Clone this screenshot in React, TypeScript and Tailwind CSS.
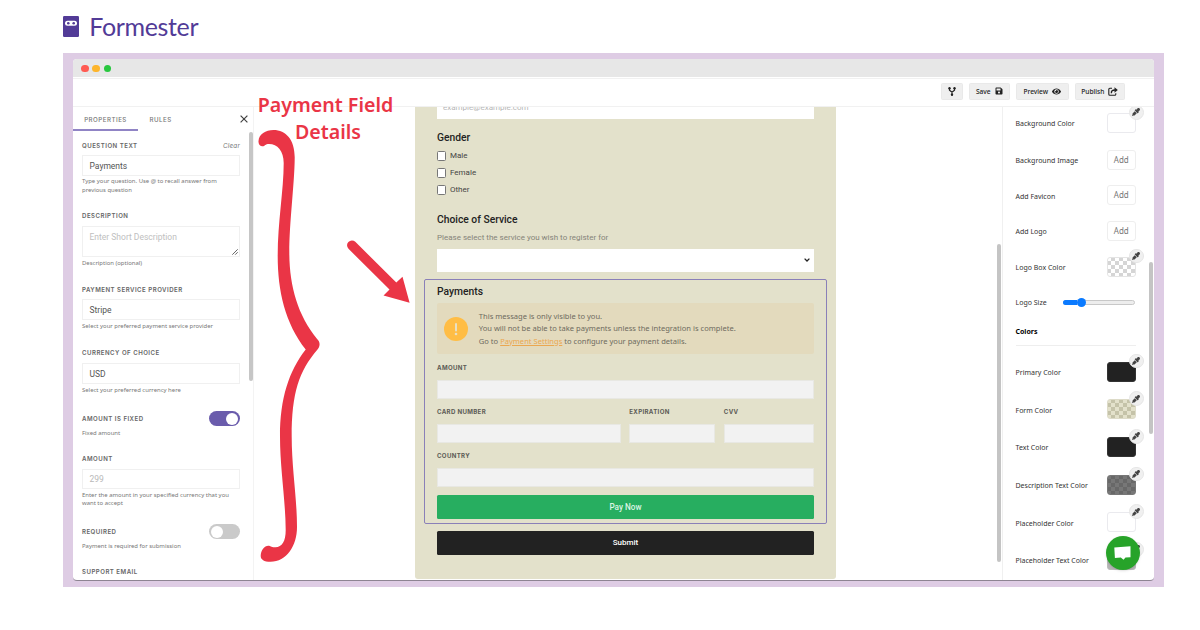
import type { ReactNode } from "react";
import { FaSave, FaEye, FaEyeDropper } from "react-icons/fa";

function Caption({ children, className = "" }: { children: ReactNode; className?: string }) {
  return (
    <div className={"h-2 text-[6.1px] leading-2 font-semibold tracking-[0.48px] whitespace-nowrap text-[#666] " + className}>
      {children}
    </div>
  );
}

function Help({ children, className = "" }: { children: ReactNode; className?: string }) {
  return (
    <div className={"font-['Noto_Sans',sans-serif] text-[5.95px] leading-[8.5px] whitespace-nowrap text-[#777] " + className}>
      {children}
    </div>
  );
}

function Field({ value, muted = false, className = "h-[21px]" }: { value: string; muted?: boolean; className?: string }) {
  return (
    <div
      className={
        "flex w-[158px] items-center border border-[#f0f0f0] pt-px pl-[6.5px] font-[Roboto,sans-serif] text-[8.5px] " +
        (muted ? "text-[#b9b9b9] " : "text-[#555] ") +
        className
      }
    >
      {value}
    </div>
  );
}

function Toggle({ on }: { on: boolean }) {
  return (
    <div className={"flex h-[15px] w-[31px] items-center rounded-full px-[2px] " + (on ? "justify-end bg-[#6a5cac]" : "bg-[#cacaca]")}>
      <div className="size-[12px] rounded-full bg-white" />
    </div>
  );
}

function PropertiesPanel() {
  return (
    <aside className="relative h-[473px] w-[180.5px] shrink-0 overflow-hidden border-r border-[#f3f3f3] font-[Inter,sans-serif]">
      <div className="flex h-6 items-center text-[6.2px] font-medium tracking-[0.48px] text-[#777]">
        <div className="flex h-6 w-[65px] items-center justify-center border-b-2 border-[#9084c5] pt-[2.5px] whitespace-nowrap">PROPERTIES</div>
        <div className="ml-[11.5px] pt-px">RULES</div>
        <svg className="mr-[5px] ml-auto size-2" viewBox="0 0 8 8" stroke="#444" strokeWidth="1.2">
          <path d="M.6.6 7.4 7.4M7.4.6.6 7.4" />
        </svg>
      </div>
      <div className="ml-[9px] flex w-[158px] flex-col pt-[10.6px]">
        <div className="flex justify-between">
          <Caption>QUESTION TEXT</Caption>
          <div className="text-[6.3px] leading-2 tracking-[0.2px] text-[#777] italic">Clear</div>
        </div>
        <Field value="Payments" className="mt-[5.4px] h-[21px]" />
        <Help className="mt-[1.5px]">
          Type your question. Use @ to recall answer from
          <br />
          previous question
        </Help>
        <Caption className="mt-[18px]">DESCRIPTION</Caption>
        <div className="relative mt-[5.5px] h-[31px] border border-[#f0f0f0] pt-[5px] pl-[6.5px] font-[Roboto,sans-serif] text-[8.5px] leading-[10px] text-[#c0c0c0]">
          Enter Short Description
          <svg className="absolute right-[1px] bottom-[1px] size-[6px]" viewBox="0 0 6 6" stroke="#555" strokeWidth=".9">
            <path d="M.3 5.7 5.7.3M3.2 5.7l2.5-2.5" />
          </svg>
        </div>
        <Help className="mt-[2px]">Description (optional)</Help>
        <Caption className="mt-[18.3px]">PAYMENT SERVICE PROVIDER</Caption>
        <Field value="Stripe" className="mt-[5.4px] h-[21px]" />
        <Help className="mt-[2.3px]">Select your preferred payment service provider</Help>
        <Caption className="mt-[18.2px]">CURRENCY OF CHOICE</Caption>
        <Field value="USD" className="mt-[5.8px] h-[21px]" />
        <Help className="mt-[2.5px]">Select your preferred currency here</Help>
        <div className="mt-[16.3px] flex items-center justify-between">
          <Caption>AMOUNT IS FIXED</Caption>
          <Toggle on />
        </div>
        <Help className="mt-[2.5px]">Fixed amount</Help>
        <Caption className="mt-[18px]">AMOUNT</Caption>
        <Field value="299" muted className="mt-[6px] h-[20px]" />
        <Help className="mt-[1.6px]">
          Enter the amount in your specified currency that you
          <br />
          want to accept
        </Help>
        <div className="mt-[16.4px] flex items-center justify-between">
          <Caption>REQUIRED</Caption>
          <Toggle on={false} />
        </div>
        <Help className="mt-[2.3px]">Payment is required for submission</Help>
        <Caption className="mt-[18px]">SUPPORT EMAIL</Caption>
      </div>
      <div className="absolute top-[25px] right-0 h-[249px] w-[3.5px] rounded-full bg-[#c6c6c6]" />
    </aside>
  );
}

function CardField({ label, className }: { label: string; className: string }) {
  return (
    <div className={className}>
      <div className="h-2 font-[Inter,sans-serif] text-[6.1px] leading-2 font-bold tracking-[0.34px] whitespace-nowrap text-[#5c5b55]">{label}</div>
      <div className="mt-2 h-[19px] border border-[#e8e8e3] bg-[#f2f2f2]" />
    </div>
  );
}

function FormPreview() {
  return (
    <main className="relative h-[473px] flex-1">
      <div className="ml-[161.5px] h-[471.5px] w-[421px] overflow-hidden rounded-b-[3px] bg-[#e3e1cb] px-[22px] font-[Roboto,sans-serif]">
        <div className="h-[11.5px] overflow-hidden bg-white pl-[6px]">
          <div className="-mt-[4px] text-[8px] leading-[10px] text-[#b5b5b5]">example@example.com</div>
        </div>
        <div className="mt-[12.5px] text-[10.3px] leading-[14px] font-medium text-[#222]">Gender</div>
        <div className="mt-[2.8px] flex flex-col">
          {["Male", "Female", "Other"].map((name) => (
            <div key={name} className="flex h-[16.8px] items-center gap-[4px] text-[8px] text-[#444]">
              <div className="-ml-[0.5px] size-[9.5px] rounded-[1.5px] border border-[#777] bg-white" />
              {name}
            </div>
          ))}
        </div>
        <div className="mt-[15.2px] text-[10.3px] leading-[14px] font-medium text-[#222]">Choice of Service</div>
        <div className="mt-[6px] text-[8px] leading-[10px] text-[#85847a]">Please select the service you wish to register for</div>
        <div className="mt-[5.6px] flex h-[23px] items-center justify-end bg-white pr-[4px]">
          <svg className="h-[4px] w-[6px]" viewBox="0 0 6 4" fill="none" stroke="#222" strokeWidth="1.3">
            <path d="M.6.6 3 3 5.4.6" />
          </svg>
        </div>
        <section className="-mx-[13px] mt-[6.9px] h-[245px] rounded-[2px] border border-[#8a80b8] px-[12px]">
          <div className="mt-[5.1px] text-[10.3px] leading-[14px] font-medium text-[#222]">Payments</div>
          <div className="mt-[4.4px] flex h-[51px] items-center rounded-[2px] bg-[#e3dabd] pl-[7px]">
            <svg className="size-6" viewBox="0 0 24 24">
              <circle cx="12" cy="12" r="12" fill="#ffbd45" />
              <path d="M12 7v6.5" stroke="#e8e0c4" strokeWidth="2" strokeLinecap="round" />
              <circle cx="12" cy="17" r="1.3" fill="#e8e0c4" />
            </svg>
            <div className="-mt-px ml-[10.8px] font-['Noto_Sans',sans-serif] text-[7.57px] leading-[12.5px] whitespace-nowrap text-[#6e6b60]">
              This message is only visible to you.
              <br />
              You will not be able to take payments unless the integration is complete.
              <br />
              Go to <span className="text-[#eba750] underline">Payment Settings</span> to configure your payment details.
            </div>
          </div>
          <CardField label="AMOUNT" className="mt-[9.5px]" />
          <div className="mt-[9px] flex">
            <CardField label="CARD NUMBER" className="w-[184px]" />
            <CardField label="EXPIRATION" className="ml-[8.3px] w-[86px]" />
            <CardField label="CVV" className="ml-[8.5px] w-[90px]" />
          </div>
          <CardField label="COUNTRY" className="mt-[9px]" />
          <div className="mt-[8px] flex h-[24px] items-center justify-center rounded-[1.5px] bg-[#27ae60] text-[8.2px] font-medium text-[#dcf5e4]">Pay Now</div>
        </section>
        <div className="mt-[7px] flex h-[24px] items-center justify-center rounded-[1.5px] bg-[#222] text-[8px] font-medium text-white">Submit</div>
      </div>
      <div className="absolute top-[137px] right-[1px] h-[318px] w-[3.5px] rounded-full bg-[#c4c4c4]" />
    </main>
  );
}

function Swatch({ fill }: { fill: string }) {
  return (
    <div className="relative">
      <div className={"h-[20px] w-[28.5px] rounded-[3px] border " + fill} />
      <div className="absolute -top-[8px] -right-[8px] flex size-[14.5px] items-center justify-center rounded-full border border-[#e6e6e6] bg-[#f0f0f0]">
        <FaEyeDropper className="size-[8px] text-[#444]" />
      </div>
    </div>
  );
}

const AddButton = () => (
  <div className="flex h-[20px] w-[28.5px] items-center justify-center rounded-[3px] border border-[#eee] text-[8px] text-[#777]">Add</div>
);

function Setting({ label, children, className }: { label: string; children?: ReactNode; className: string }) {
  return (
    <div className={"flex w-[120px] shrink-0 items-center justify-between " + className}>
      <span className="pt-[3px] text-[7px] whitespace-nowrap">{label}</span>
      {children}
    </div>
  );
}

const white = "border-[#eaeaee] bg-white";
const dark = "border-[#333] bg-[#222]";
const checkedLight = "border-[#e4e4e4] bg-[repeating-conic-gradient(#d5d5d5_0_25%,#fff_0_50%)] bg-[length:8px_8px] bg-origin-border";
const checkedSand = "border-[#dddbc8] bg-[repeating-conic-gradient(#c5c3a9_0_25%,#e3e1cb_0_50%)] bg-[length:8px_8px] bg-origin-border";
const checkedGray = "border-[#777] bg-[repeating-conic-gradient(#686868_0_25%,#777_0_50%)] bg-[length:8px_8px] bg-origin-border";

function DesignPanel() {
  return (
    <aside className="relative h-[473px] w-[152px] shrink-0 overflow-hidden border-l border-[#f0f0f0] pl-[13px] font-['Noto_Sans',sans-serif] text-[#333]">
      <Setting label="Background Color" className="h-[32px]"><Swatch fill={white} /></Setting>
      <Setting label="Background Image" className="mt-[3.5px] h-[35px]"><AddButton /></Setting>
      <Setting label="Add Favicon" className="h-[35.5px]"><AddButton /></Setting>
      <Setting label="Add Logo" className="h-[35.5px]"><AddButton /></Setting>
      <Setting label="Logo Box Color" className="h-[36px]"><Swatch fill={checkedLight} /></Setting>
      <Setting label="Logo Size" className="h-[35px]">
        <div className="mr-px flex h-[5px] w-[72px] items-center rounded-full border border-[#c8c8c8] bg-[#ededed]">
          <div className="-ml-px h-[5px] w-[14px] rounded-l-full bg-[#0a7aff]" />
          <div className="size-[9px] shrink-0 rounded-full bg-[#0a7aff]" />
        </div>
      </Setting>
      <div className="h-[26px] w-[120px] border-b border-[#eee] pt-[6px] text-[7px] leading-[12px] font-bold text-black">Colors</div>
      <Setting label="Primary Color" className="mt-[7px] h-[38px]"><Swatch fill={dark} /></Setting>
      <Setting label="Form Color" className="h-[37.7px]"><Swatch fill={checkedSand} /></Setting>
      <Setting label="Text Color" className="h-[37.7px]"><Swatch fill={dark} /></Setting>
      <Setting label="Description Text Color" className="h-[37.7px]"><Swatch fill={checkedGray} /></Setting>
      <Setting label="Placeholder Color" className="h-[37.7px]"><Swatch fill={white} /></Setting>
      <Setting label="Placeholder Text Color" className="h-[37.7px]"><Swatch fill="border-[#bbb] bg-[#b5b5b5]" /></Setting>
      <div className="absolute top-[155px] right-[1px] h-[172px] w-[3.5px] rounded-full bg-[#c4c4c4]" />
      <div className="absolute top-[428.5px] right-[14px] flex size-[34px] items-center justify-center rounded-full bg-[#27a329] shadow-sm">
        <svg className="h-[14px] w-[17px]" viewBox="0 0 17 14" fill="#fff">
          <path d="M.3 1.5 16.5.3V11.2L11.5 11.5 9.5 13.8 6.8 11.6.9 11.9Z" />
        </svg>
      </div>
    </aside>
  );
}

function ToolButton({ children, className }: { children: ReactNode; className: string }) {
  return <div className={"flex h-[17px] items-center justify-center gap-[4px] rounded-[1.5px] border border-[#e9e9e9] bg-[#efefef] " + className}>{children}</div>;
}

export default function App() {
  return (
    <div className="relative h-[630px] w-[1200px] overflow-hidden bg-white">
      <header className="flex h-[53px] items-center pb-px pl-[63px]">
        <svg className="h-[21px] w-[16px]" viewBox="0 0 16 21">
          <rect width="16" height="21" rx="1.2" fill="#523b97" />
          <rect x="2" y="4.8" width="12" height="5" rx="2.5" fill="#fff" />
          <circle cx="5.3" cy="7.3" r="1.3" fill="#523b97" />
          <circle cx="10.7" cy="7.3" r="1.3" fill="#523b97" />
        </svg>
        <div className="ml-[10.2px] font-[Lato,sans-serif] text-[25px] leading-[30px] tracking-[-0.35px] text-[#523b97]">Formester</div>
      </header>
      <div className="ml-[63px] h-[533.5px] w-[1101px] bg-[#decce4] pt-[6px] pl-[10px]">
        <div className="h-[522px] w-[1080.5px] overflow-hidden rounded-[4px] border-b border-[#8d8492] bg-white">
          <div className="flex h-[18px] items-center gap-[3.5px] bg-[#e7e7e7] pt-px pl-[8px]">
            <div className="size-[7.8px] rounded-full bg-[#ff5b52]" />
            <div className="size-[7.8px] rounded-full bg-[#fdb52c]" />
            <div className="size-[7.8px] rounded-full bg-[#28c73f]" />
          </div>
          <div className="mt-px flex h-[29px] items-center gap-[6px] border-y border-[#f1f1f1] pr-[28.7px] pb-[3px] font-['Noto_Sans',sans-serif] text-[6.6px] font-medium text-[#222]">
            <ToolButton className="ml-auto w-[22px]">
              <svg className="h-[9px] w-[8px]" viewBox="0 0 8 9" fill="none" stroke="#222" strokeWidth="1.2">
                <path d="M1.5 1.5v1.7L4 5.2l2.5-2V1.5M4 5v3" />
                <circle cx="1.5" cy="1.3" r="1.2" fill="#222" stroke="none" />
                <circle cx="6.5" cy="1.3" r="1.2" fill="#222" stroke="none" />
                <circle cx="4" cy="7.7" r="1.2" fill="#222" stroke="none" />
              </svg>
            </ToolButton>
            <ToolButton className="w-[41px]"><span className="pt-px">Save</span> <FaSave className="size-[8px]" /></ToolButton>
            <ToolButton className="w-[53px]"><span className="pt-px">Preview</span> <FaEye className="size-[9px]" /></ToolButton>
            <ToolButton className="w-[50px]">
              <span className="pt-px">Publish</span>
              <svg className="h-[9px] w-[10px]" viewBox="0 0 10 9" fill="none" stroke="#222" strokeWidth="1.1">
                <path d="M4 1.2H1.8Q.8 1.200.8 2.200V7.200Q.8 8.200 1.800 8.200H6.800Q7.800 8.200 7.800 7.200V6.200" />
                <path d="M3.400 6.300C3.200 4 4.300 3 7 3" strokeWidth="1.400" />
                <path d="M6.500.3 9.800 3 6.500 5.700Z" fill="#222" stroke="none" />
              </svg>
            </ToolButton>
          </div>
          <div className="flex h-[473px]">
            <PropertiesPanel />
            <FormPreview />
            <DesignPanel />
          </div>
        </div>
      </div>
      <div className="absolute top-[91px] left-[225.5px] w-[200px] text-center font-['Noto_Sans',sans-serif] text-[19.6px] leading-[27px] font-semibold whitespace-nowrap text-[#ea3546]">
        Payment Field
        <div className="pl-[5px]">Details</div>
      </div>
      <svg className="absolute top-0 left-0 h-[630px] w-[430px]" viewBox="0 0 430 630" fill="#ea3546">
        <path d="M258.5 141C259 134 265.5 130 273.5 130C286 130 295 140 294.7 158C294.5 184 289.3 222 289.3 253C289.5 287 298 315 316.7 338.5C320.5 342 320.3 346 317.5 349.5C299 371 291.7 393 291.7 436.5C291.7 468 297 498 297 527C297 546 286.5 561.8 270.5 561.8C264 561.8 260.7 559.5 260.7 556C260.7 550.5 264.5 545.7 268.3 545.7C271 545.7 270.5 547.5 275.5 547.3C282 547 285.7 541.5 285.7 530C285.5 500 280 468 280 436.5C280 398 289 371 305.7 349.5C285 323 277.7 291 277.7 256C277.7 222 283.7 190 283.7 163C283.7 151 277.5 144 269 144C265 144 265 146.5 262 146.2C259.5 146 258.3 143.5 258.5 141Z" />
        <path d="M348.5 248.8A4.8 4.8 0 0 1 355.3 241.8L396.3 282.5 402.5 276.7 409.6 302.7 383.5 295.5 389.5 289.5Z" />
      </svg>
    </div>
  );
}
